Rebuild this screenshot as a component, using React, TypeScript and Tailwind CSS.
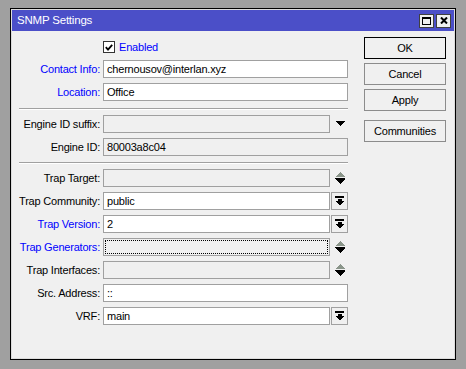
import React from "react";

function UpDown() {
  return (
    <svg width="10" height="12" viewBox="0 0 10 12" shapeRendering="crispEdges">
      <polygon points="5,0 10,5 0,5" fill="#8a958a" />
      <polygon points="0,6 10,6 10,7 5,12 0,7" fill="#000" />
    </svg>
  );
}

function DownTri() {
  return (
    <svg width="10" height="6" viewBox="0 0 10 6" shapeRendering="crispEdges">
      <polygon points="0,0 10,0 5,5" fill="#000" />
    </svg>
  );
}

function DropIcon() {
  return (
    <svg width="9" height="10" viewBox="0 0 9 10" shapeRendering="crispEdges">
      <rect x="0" y="0" width="9" height="1.5" fill="#000" />
      <polygon points="2.5,3 6.5,3 6.5,5 9,5 4.5,9.5 0,5 2.5,5" fill="#000" />
    </svg>
  );
}

function Row({
  label,
  blue,
  children,
  first,
}: {
  label: string;
  blue?: boolean;
  children: React.ReactNode;
  first?: boolean;
}) {
  return (
    <div className={first ? "flex items-center h-[18px] mt-[3px]" : "flex items-center h-[18px] mt-[5px]"}>
      <div className={blue ? "w-[88px] text-right text-[#0000ff] whitespace-nowrap" : "w-[88px] text-right text-black whitespace-nowrap"}>
        {label}
      </div>
      <div className="ml-[3px] flex w-[245px] h-[18px] items-center">{children}</div>
    </div>
  );
}

function Input({ value, disabled, short, focus }: { value?: string; disabled?: boolean; short?: boolean; focus?: boolean }) {
  const w = short ? "w-[227px]" : "w-[245px]";
  const bg = disabled ? "bg-[#f0f0f0]" : "bg-white";
  return (
    <div className={`${w} ${bg} h-[18px] border border-[#a0a0a0] leading-[16px] pl-[3px] text-black relative`}>
      {value}
      {focus ? <div className="absolute inset-[1px] border border-dotted border-black"></div> : null}
    </div>
  );
}

function DropBtn() {
  return (
    <div className="ml-[1px] w-[17px] h-[18px] border border-[#a0a0a0] bg-[#f0f0f0] flex items-center justify-center">
      <DropIcon />
    </div>
  );
}

function ArrowSlot({ kind }: { kind: "updown" | "down" }) {
  return (
    <div className="w-[18px] h-[18px] flex items-center justify-center pl-[1px]">
      {kind === "updown" ? <UpDown /> : <DownTri />}
    </div>
  );
}

function Sep({ mt }: { mt: string }) {
  return (
    <div className={`${mt} ml-[7px] w-[329px] h-[2px] border-t border-[#a0a0a0] border-b border-b-white`}></div>
  );
}

function Btn({ label, def, mt }: { label: string; def?: boolean; mt: string }) {
  return (
    <div
      className={`${mt} w-[82px] h-[22px] flex items-center justify-center bg-[#f0f0f0] border ${
        def ? "border-black" : "border-[#8c8c8c]"
      } text-black`}
    >
      {label}
    </div>
  );
}

export default function App() {
  return (
    <div className="w-[466px] h-[369px] bg-[#a0a0a0] pt-[8px] pl-[10px] font-['Liberation_Sans',Arial,sans-serif] text-[11px] tracking-[-0.2px]">
      <div className="w-[446px] h-[352px] border border-black bg-[#f0f0f0] flex flex-col">
        <div className="w-full h-full border border-[#dcdcdc] flex flex-col">
          {/* title bar */}
          <div className="h-[21px] bg-[#4b4fc8] flex items-center pl-[5px] pr-[3px]">
            <div className="text-white text-[11.5px] flex-1">SNMP Settings</div>
            <div className="flex gap-[2px]">
              <div className="w-[15px] h-[14px] bg-[#f0f0f0] border border-[#404040] flex items-center justify-center">
                <svg width="9" height="8" viewBox="0 0 9 8" shapeRendering="crispEdges">
                  <rect x="0.5" y="0.5" width="8" height="7" fill="none" stroke="#000" />
                  <rect x="0" y="0" width="9" height="2" fill="#000" />
                </svg>
              </div>
              <div className="w-[15px] h-[14px] bg-[#f0f0f0] border border-[#404040] flex items-center justify-center">
                <svg width="8" height="7" viewBox="0 0 8 7">
                  <path d="M1 0.5 L7 6.5 M7 0.5 L1 6.5" stroke="#000" strokeWidth="2" />
                </svg>
              </div>
            </div>
          </div>
          {/* body */}
          <div className="flex pt-[6px] pr-[7px]">
            <div className="w-[336px] flex flex-col">
              <div className="flex items-center h-[20px]">
                <div className="w-[88px]"></div>
                <div className="ml-[3px] flex items-center">
                  <div className="w-[12px] h-[12px] border border-[#333] bg-white flex items-center justify-center">
                    <svg width="8" height="7" viewBox="0 0 8 7">
                      <path d="M0.8 3.2 L3 5.6 L7.2 0.8" stroke="#000" strokeWidth="1.8" fill="none" />
                    </svg>
                  </div>
                  <span className="ml-[4px] text-[#0000ff]">Enabled</span>
                </div>
              </div>
              <Row label="Contact Info:" blue first>
                <Input value="chernousov@interlan.xyz" />
              </Row>
              <Row label="Location:" blue>
                <Input value="Office" />
              </Row>
              <Sep mt="mt-[7px]" />
              <Row label="Engine ID suffix:">
                <Input disabled short />
                <ArrowSlot kind="down" />
              </Row>
              <Row label="Engine ID:">
                <Input disabled value="80003a8c04" />
              </Row>
              <Sep mt="mt-[6px]" />
              <Row label="Trap Target:">
                <Input disabled short />
                <ArrowSlot kind="updown" />
              </Row>
              <Row label="Trap Community:">
                <Input short value="public" />
                <DropBtn />
              </Row>
              <Row label="Trap Version:" blue>
                <Input short value="2" />
                <DropBtn />
              </Row>
              <Row label="Trap Generators:" blue>
                <Input disabled short focus />
                <ArrowSlot kind="updown" />
              </Row>
              <Row label="Trap Interfaces:">
                <Input disabled short />
                <ArrowSlot kind="updown" />
              </Row>
              <Row label="Src. Address:">
                <Input value="::" />
              </Row>
              <Row label="VRF:">
                <Input short value="main" />
                <DropBtn />
              </Row>
            </div>
            <div className="ml-[16px] flex flex-col">
              <Btn label="OK" def mt="mt-0" />
              <Btn label="Cancel" mt="mt-[4px]" />
              <Btn label="Apply" mt="mt-[4px]" />
              <Btn label="Communities" mt="mt-[9px]" />
            </div>
          </div>
        </div>
      </div>
    </div>
  );
}
